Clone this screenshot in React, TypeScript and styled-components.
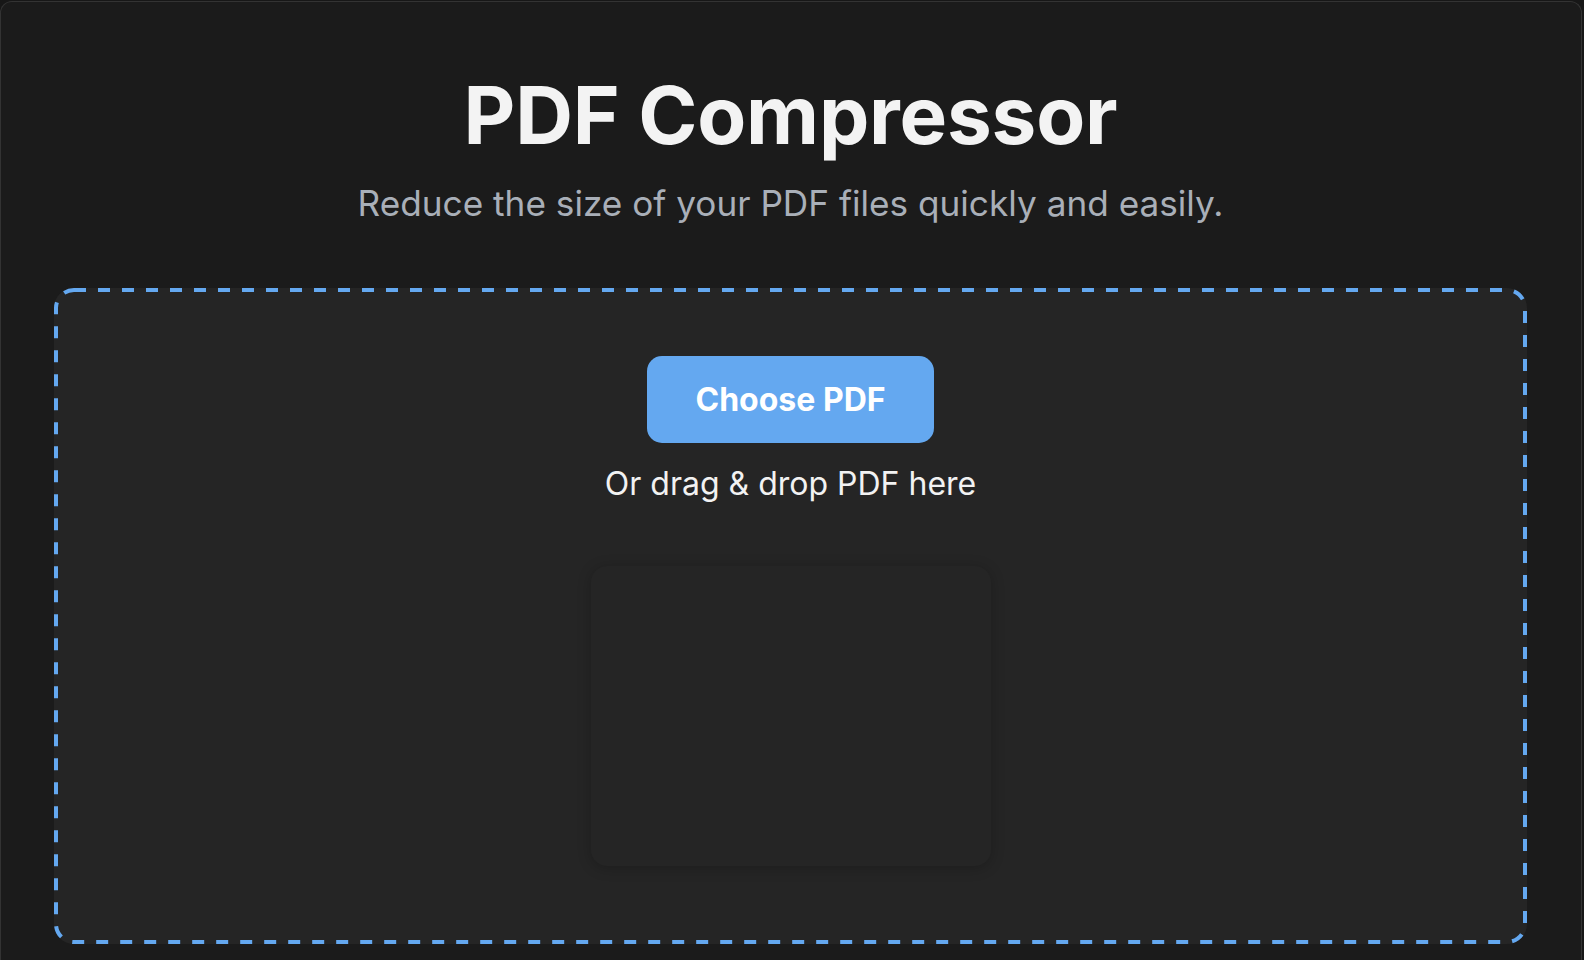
import React, { useRef, useState } from 'react';
import styled, { createGlobalStyle } from 'styled-components';

const GlobalStyle = createGlobalStyle`
  * {
    box-sizing: border-box;
  }

  html,
  body {
    margin: 0;
    padding: 0;
    background-color: #171717;
    font-family: Inter, 'Noto Sans', 'Liberation Sans', sans-serif;
  }
`;

const Window = styled.div`
  width: calc(100% - 2px);
  min-height: 959px;
  margin-top: 1px;
  background-color: #1b1b1b;
  border: 1px solid #333333;
  border-bottom: none;
  border-radius: 12px 12px 0 0;
  padding: 0 54px 0 53px;
  display: flex;
  flex-direction: column;
  align-items: stretch;
`;

const Header = styled.header`
  display: flex;
  flex-direction: column;
  align-items: center;
  padding-top: 65px;
`;

const Title = styled.h1`
  margin: 0;
  font-size: 80px;
  line-height: 96px;
  font-weight: 700;
  color: #f3f3f3;
  letter-spacing: -0.2px;
`;

const Subtitle = styled.p`
  margin: 13px 0 0;
  font-size: 35.2px;
  line-height: 54px;
  font-weight: 400;
  color: #a9afb8;
`;

const DropZone = styled.section<{ $active: boolean }>`
  position: relative;
  margin-top: 58px;
  height: 656px;
  border-radius: 20px;
  background-color: ${({ $active }) => ($active ? '#2a2d33' : '#252525')};
  padding: 68px 0 78px;
  display: flex;
  flex-direction: column;
  align-items: center;
`;

// custom dash pattern (12 on / 12 off), a plain css dashed border is too short
const DashedOutline = styled.svg`
  position: absolute;
  top: 2px;
  left: 2px;
  width: calc(100% - 4px);
  height: calc(100% - 4px);
  overflow: visible;
  pointer-events: none;

  rect {
    fill: none;
    stroke: #64a8f0;
    stroke-width: 4;
    stroke-dasharray: 12 12;
  }
`;

const ChooseButton = styled.button`
  padding: 24px 48px;
  font-family: inherit;
  font-size: 32px;
  line-height: 39px;
  font-weight: 700;
  color: #ffffff;
  background-color: #64a8f0;
  border: none;
  border-radius: 15px;
  cursor: pointer;

  &:hover {
    background-color: #5a9ee8;
  }
`;

const HiddenInput = styled.input`
  display: none;
`;

const DropHint = styled.p`
  margin: 17px 0 0;
  font-size: 32px;
  line-height: 48px;
  color: #f2f2f2;
`;

const PreviewCard = styled.div`
  margin-top: 58px;
  width: 400px;
  height: 300px;
  border-radius: 16px;
  background-color: #252525;
  box-shadow: 0 2px 14px rgba(0, 0, 0, 0.22);
  display: flex;
  align-items: center;
  justify-content: center;
  color: #9aa0a8;
  font-size: 20px;
`;

const App: React.FC = () => {
  const inputRef = useRef<HTMLInputElement>(null);
  const [fileName, setFileName] = useState<string | null>(null);
  const [dragging, setDragging] = useState(false);

  const handleFiles = (files: FileList | null) => {
    if (files && files.length > 0) {
      setFileName(files[0].name);
    }
  };

  return (
    <>
      <GlobalStyle />
      <Window>
        <Header>
          <Title>PDF Compressor</Title>
          <Subtitle>Reduce the size of your PDF files quickly and easily.</Subtitle>
        </Header>

        <DropZone
          $active={dragging}
          onDragOver={(e) => {
            e.preventDefault();
            setDragging(true);
          }}
          onDragLeave={() => setDragging(false)}
          onDrop={(e) => {
            e.preventDefault();
            setDragging(false);
            handleFiles(e.dataTransfer.files);
          }}
        >
          <DashedOutline aria-hidden="true">
            <rect x="0" y="0" width="100%" height="100%" rx="18" ry="18" />
          </DashedOutline>
          <ChooseButton onClick={() => inputRef.current?.click()}>Choose PDF</ChooseButton>
          <HiddenInput
            ref={inputRef}
            type="file"
            accept="application/pdf"
            onChange={(e) => handleFiles(e.target.files)}
          />
          <DropHint>Or drag &amp; drop PDF here</DropHint>
          <PreviewCard>{fileName}</PreviewCard>
        </DropZone>
      </Window>
    </>
  );
};

export default App;
